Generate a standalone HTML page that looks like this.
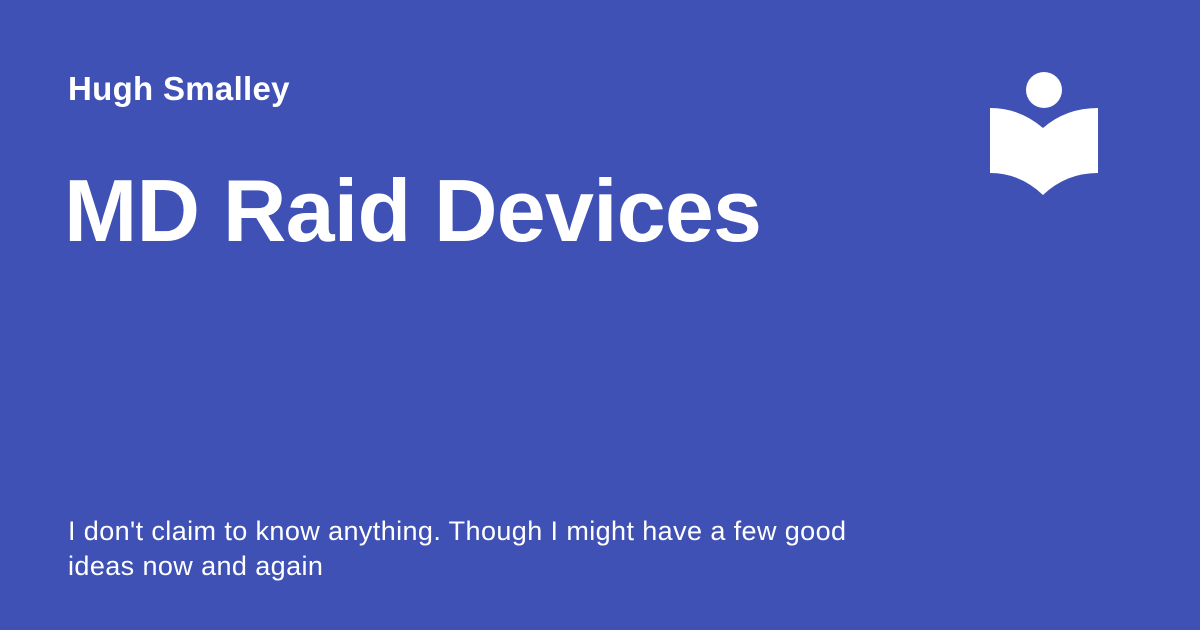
<!DOCTYPE html>
<html><head><style>
body{margin:0;width:1200px;height:630px;background:#3f51b5;overflow:hidden;font-family:"Liberation Sans",sans-serif;color:#fff;position:relative}
.a{position:absolute;left:68px;top:70px;font-size:33px;font-weight:bold;letter-spacing:0.3px}
.t{position:absolute;left:64px;top:160px;font-size:88px;font-weight:bold;letter-spacing:-0.8px}
.d{position:absolute;left:68px;top:514px;font-size:27px;line-height:35px;width:850px;letter-spacing:0.4px}
</style></head><body>
<div class="a">Hugh Smalley</div>
<div class="t">MD Raid Devices</div>
<div class="d">I don't claim to know anything. Though I might have a few good<br>ideas now and again</div>
<svg style="position:absolute;left:0;top:0" width="1200" height="630">
<circle cx="1044" cy="90" r="18" fill="#fff"/>
<path d="M990 108 Q1020 108 1043 128 Q1066 108 1098 108 L1098 173 Q1066 173 1043 195 Q1020 173 990 173 Z" fill="#fff"/>
</svg>
</body></html>
